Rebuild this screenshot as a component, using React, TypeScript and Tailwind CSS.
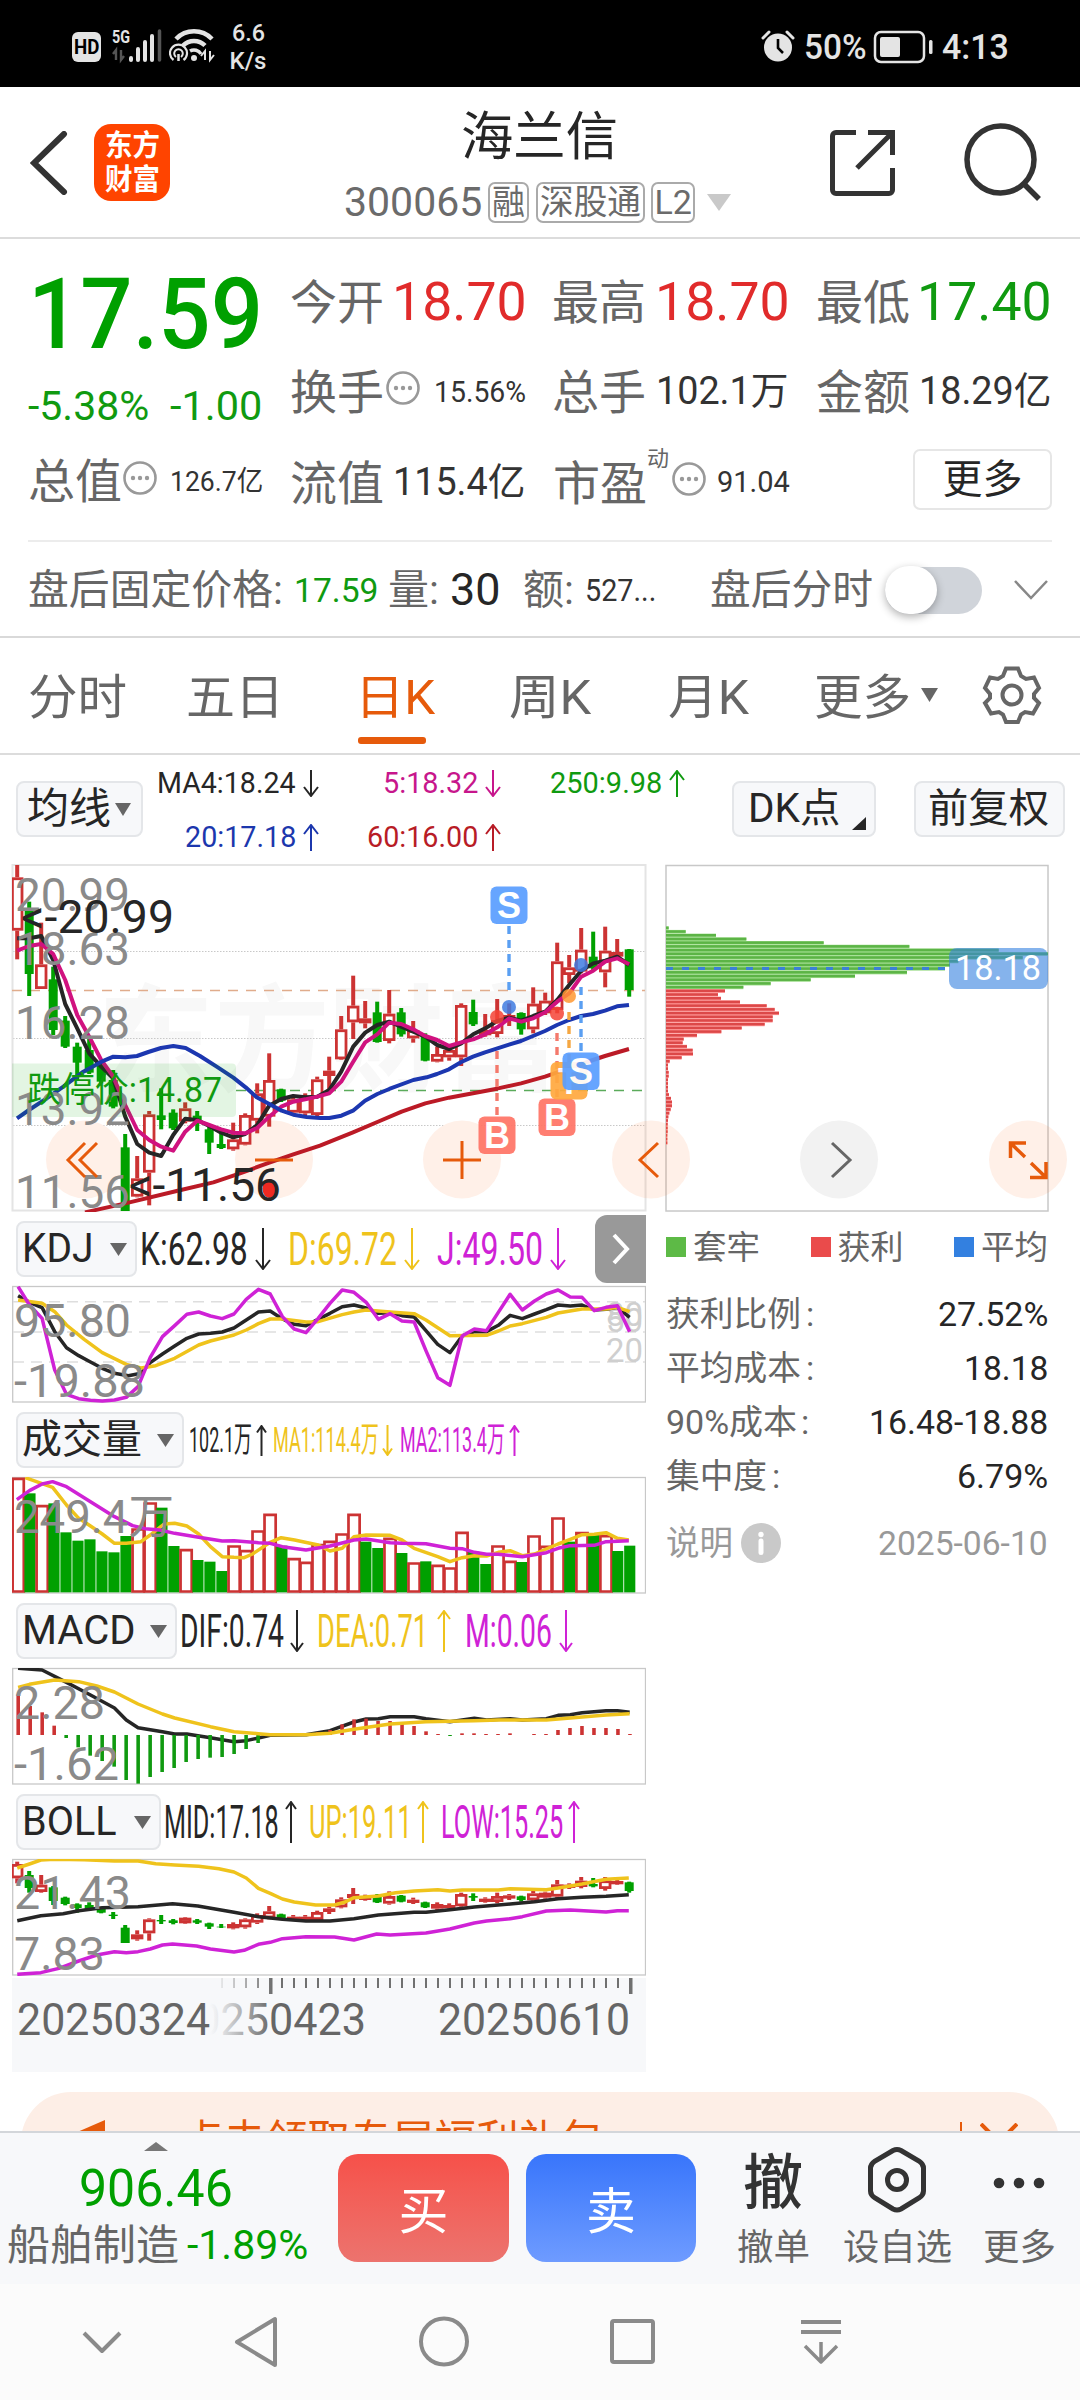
import { useLayoutEffect, useRef, useState, type ReactNode } from "react";

/* Text squeezed or stretched horizontally to a fixed width. */
function Fit({ w, className = "", children }: { w: number; className?: string; children: ReactNode }) {
  const ref = useRef<HTMLSpanElement>(null);
  const [k, setK] = useState(1);
  useLayoutEffect(() => {
    if (ref.current && ref.current.offsetWidth > 0) setK(w / ref.current.offsetWidth);
  }, [w]);
  return (
    <span className={`block shrink-0 whitespace-nowrap leading-none ${className}`} style={{ width: w }}>
      <span ref={ref} className="inline-block origin-left" style={{ transform: `scaleX(${k})` }}>
        {children}
      </span>
    </span>
  );
}

function Arrow({ up, w, h, className = "" }: { up?: boolean; w: number; h: number; className?: string }) {
  const m = w / 2;
  const d = up ? `M${m} ${h}V1M1 ${m + 2}L${m} 1L${w - 1} ${m + 2}` : `M${m} 0V${h - 1}M1 ${h - m - 2}L${m} ${h - 1}L${w - 1} ${h - m - 2}`;
  return (
    <svg width={w} height={h} viewBox={`0 0 ${w} ${h}`} className={`shrink-0 ${className}`} fill="none" stroke="currentColor" strokeWidth="2">
      <path d={d} />
    </svg>
  );
}

function Down({ w, h, className = "" }: { w: number; h: number; className?: string }) {
  return (
    <svg width={w} height={h} viewBox="0 0 10 10" preserveAspectRatio="none" className={`shrink-0 ${className}`}>
      <path d="M0 0H10L5 10Z" fill="currentColor" />
    </svg>
  );
}

function Dots({ className = "" }: { className?: string }) {
  return (
    <svg width="34" height="34" viewBox="0 0 34 34" className={`shrink-0 ${className}`}>
      <circle cx="17" cy="17" r="15.5" fill="none" stroke="#999" strokeWidth="2.600" />
      <circle cx="10" cy="17" r="2.200" fill="#999" />
      <circle cx="17" cy="17" r="2.200" fill="#999" />
      <circle cx="24" cy="17" r="2.200" fill="#999" />
    </svg>
  );
}

function StatusBar() {
  return (
    <div className="flex h-[87px] items-start bg-black text-[#e4e4e4]">
      <div className="ml-[72px] mt-[32px] flex h-[30px] w-[29px] items-center justify-center rounded-[6px] bg-[#e4e4e4]">
        <Fit w={25} className="text-[21px] font-bold text-black">HD</Fit>
      </div>
      <svg width="52" height="36" viewBox="111 28 52 36" className="ml-[10px] mt-[28px]">
        <text x="112" y="43" fontSize="19" fontWeight="700" fill="#e4e4e4" textLength="18" lengthAdjust="spacingAndGlyphs">5G</text>
        <path d="M116 60V50l-3 4M121 50v10l3-4" stroke="#555" strokeWidth="2.4" fill="none" />
        <path d="M131 60V58M138 60V49M145 60V42M152 60V36" stroke="#e4e4e4" strokeWidth="4" strokeLinecap="round" />
        <path d="M159.500 60V31" stroke="#555" strokeWidth="3.500" strokeLinecap="round" />
      </svg>
      <svg width="48" height="36" viewBox="169 28 48 36" className="ml-[6px] mt-[28px]" fill="none" stroke="#e4e4e4" strokeWidth="4.500">
        <path d="M176 39a25 25 0 0 1 36 0" />
        <path d="M183 45.500a15.500 15.500 0 0 1 22 0" />
        <path d="M190 51a8 8 0 0 1 11 3" strokeWidth="3.500" />
        <path d="M173.500 60a8.500 8.500 0 1 1 10 0" strokeWidth="2.200" />
        <path d="M176 57a4.300 4.300 0 1 1 5 0" strokeWidth="2" />
        <path d="M178.500 54V61" strokeWidth="2.500" />
        <circle cx="194" cy="58" r="3" fill="#e4e4e4" stroke="none" />
        <path d="M205 60V51l-4 5M210 51v9l4-5" strokeWidth="2" />
      </svg>
      <div className="ml-[11px] mt-[21px] flex w-[40px] flex-col items-center gap-[4px] text-[24px] font-medium">
        <Fit w={33}>6.6</Fit>
        <Fit w={37}>K/s</Fit>
      </div>
      <svg width="34" height="34" viewBox="762 29 34 34" className="ml-[493px] mt-[29px]">
        <circle cx="779" cy="47.500" r="14" fill="#e4e4e4" />
        <path d="M779 39v9l5 5" stroke="#000" strokeWidth="2.600" fill="none" />
        <path d="M764 38l6-6M794 38l-6-6" stroke="#e4e4e4" strokeWidth="3" strokeLinecap="round" />
      </svg>
      <Fit w={63} className="ml-[9px] mt-[30px] text-[35px] font-medium">50%</Fit>
      <svg width="62" height="34" viewBox="874 30 62 34" className="ml-[6px] mt-[30px]">
        <rect x="876" y="32" width="49" height="30" rx="6" fill="none" stroke="#e4e4e4" strokeWidth="2.500" />
        <rect x="881" y="37" width="20" height="20" rx="2" fill="#e4e4e4" />
        <rect x="930" y="40" width="3.500" height="14" rx="1.500" fill="#e4e4e4" />
      </svg>
      <Fit w={67} className="ml-[7px] mt-[30px] text-[35px] font-medium">4:13</Fit>
    </div>
  );
}

function Header() {
  return (
    <div className="flex h-[152px] items-start border-b-2 border-[#dcdcdc]">
      <svg width="38" height="64" viewBox="30 131 38 64" className="ml-[30px] mt-[44px]" fill="none" stroke="#333" strokeWidth="6">
        <path d="M64 134L34 163L64 192" strokeLinecap="round" />
      </svg>
      <div className="ml-[26px] mt-[37px] flex h-[77px] w-[76px] flex-col items-center justify-center gap-[5px] rounded-[17px] bg-[#ff4400] pt-[2px] text-[29px] font-bold text-white">
        <Fit w={55}>东方</Fit>
        <Fit w={55}>财富</Fit>
      </div>
      <div className="ml-[174px] flex w-[390px] flex-col">
        <Fit w={157} className="ml-[117px] mt-[25px] text-[52px] text-[#262626]">海兰信</Fit>
        <div className="mt-[17px] flex h-[42px] items-center text-[#6b6b6b]">
          <Fit w={138} className="text-[41px]">300065</Fit>
          <div className="ml-[6px] flex h-[41px] w-[41px] items-center justify-center rounded-[7px] border-2 border-[#aaa] text-[34px] leading-none"><Fit w={33}>融</Fit></div>
          <div className="ml-[7px] flex h-[41px] w-[109px] items-center justify-center rounded-[7px] border-2 border-[#aaa] text-[34px] leading-none"><Fit w={101}>深股通</Fit></div>
          <div className="ml-[6px] flex h-[41px] w-[44px] items-center justify-center rounded-[7px] border-2 border-[#aaa] text-[34px] leading-none"><Fit w={37}>L2</Fit></div>
          <Down w={24} h={17} className="ml-[12px] text-[#c9c9c9]" />
        </div>
      </div>
      <svg width="218" height="86" viewBox="824 120 218 86" className="ml-[90px] mt-[33px]" fill="none" stroke="#333" strokeWidth="5">
        <path d="M856 132.500H836a3.500 3.500 0 0 0-3.500 3.500V190a3.500 3.500 0 0 0 3.500 3.500H889a3.500 3.500 0 0 0 3.500-3.500V168" />
        <path d="M868 132.500H892.500V155M892 133L857 168" />
        <circle cx="1000.500" cy="159.500" r="33.500" strokeWidth="5.500" />
        <path d="M1023 183L1039 199" strokeWidth="5.500" />
      </svg>
    </div>
  );
}

function Quote() {
  return (
    <div className="h-[399px] border-b-2 border-[#d9d9d9] px-[28px] text-[#666]">
      <div className="flex h-[301px]">
        <div className="flex w-[265px] flex-col">
          <Fit w={235} className="mt-[27px] text-[98px] font-medium text-[#00a000]">17.59</Fit>
          <div className="mt-[22px] flex text-[41px] text-[#109a10]">
            <Fit w={121}>-5.38%</Fit>
            <Fit w={92} className="ml-[21px]">-1.00</Fit>
          </div>
          <div className="mt-[31px] flex items-center">
            <Fit w={94} className="text-[47px]">总值</Fit>
            <Dots className="ml-[1px] -mt-[8px]" />
            <Fit w={93} className="ml-[13px] text-[28px] text-[#333]">126.7亿</Fit>
          </div>
        </div>
        <div className="flex flex-1 flex-col">
          <div className="mt-[33px] flex h-[60px] items-center">
            <Fit w={94} className="text-[47px]">今开</Fit>
            <Fit w={135} className="ml-[8px] text-[54px] text-[#e12b2b]">18.70</Fit>
            <Fit w={94} className="ml-[25px] text-[47px]">最高</Fit>
            <Fit w={135} className="ml-[9px] text-[54px] text-[#e12b2b]">18.70</Fit>
            <Fit w={94} className="ml-[26px] text-[47px]">最低</Fit>
            <Fit w={135} className="ml-[7px] text-[54px] text-[#109a10]">17.40</Fit>
          </div>
          <div className="mt-[30px] flex h-[60px] items-center">
            <Fit w={94} className="text-[47px]">换手</Fit>
            <Dots className="ml-[2px] -mt-[8px]" />
            <Fit w={92} className="ml-[14px] text-[29px] text-[#333]">15.56%</Fit>
            <Fit w={94} className="ml-[26px] text-[47px]">总手</Fit>
            <Fit w={132} className="ml-[10px] -mt-[2px] text-[38px] text-[#333]">102.1万</Fit>
            <Fit w={94} className="ml-[28px] text-[47px]">金额</Fit>
            <Fit w={132} className="ml-[9px] -mt-[2px] text-[38px] text-[#333]">18.29亿</Fit>
          </div>
          <div className="mt-[31px] flex h-[60px] items-center">
            <Fit w={94} className="text-[47px]">流值</Fit>
            <Fit w={132} className="ml-[9px] -mt-[2px] text-[38px] text-[#333]">115.4亿</Fit>
            <Fit w={94} className="ml-[28px] text-[47px]">市盈</Fit>
            <Fit w={22} className="-mt-[48px] text-[22px]">动</Fit>
            <Dots className="ml-[3px] -mt-[9px]" />
            <Fit w={73} className="-mt-[2px] ml-[11px] text-[29px] text-[#333]">91.04</Fit>
            <div className="-mt-[7px] ml-[123px] flex h-[61px] w-[139px] shrink-0 items-center justify-center rounded-[7px] border-2 border-[#e6e6e6]">
              <Fit w={80} className="text-[40px] text-[#262626]">更多</Fit>
            </div>
          </div>
        </div>
      </div>
      <div className="flex h-[96px] items-center border-t-2 border-[#ececec] pt-[2px]">
        <Fit w={255} className="text-[41px]">盘后固定价格:</Fit>
        <Fit w={84} className="ml-[11px] text-[34px] text-[#109a10]">17.59</Fit>
        <Fit w={51} className="ml-[10px] text-[41px]">量:</Fit>
        <Fit w={50} className="ml-[11px] text-[44px] text-[#262626]">30</Fit>
        <Fit w={51} className="ml-[23px] text-[41px]">额:</Fit>
        <Fit w={71} className="ml-[11px] text-[32px] text-[#333]">527...</Fit>
        <Fit w={163} className="ml-[54px] text-[41px]">盘后分时</Fit>
        <div className="ml-[12px] flex h-[47px] w-[97px] items-center rounded-full bg-[#d0d4da]">
          <div className="h-[48px] w-[52px] rounded-full bg-white shadow-[0_3px_8px_rgba(0,0,0,0.3)]" />
        </div>
        <svg width="34" height="22" viewBox="0 0 34 22" className="ml-[32px]" fill="none" stroke="#888" strokeWidth="2.5">
          <path d="M1 2L17 19L33 2" />
        </svg>
      </div>
    </div>
  );
}

function Tabs() {
  return (
    <div className="flex h-[117px] items-start border-b-2 border-[#dcdcdc] pt-[36px] text-[48px] text-[#666]">
      <Fit w={99} className="ml-[28px]">分时</Fit>
      <Fit w={98} className="ml-[59px]">五日</Fit>
      <div className="ml-[74px] flex w-[76px] flex-col text-[#e65a0b]">
        <Fit w={80} className="-ml-[3px]">日K</Fit>
        <div className="mt-[15px] h-[7px] w-[68px] rounded-[3px] bg-[#e65a0b]" />
      </div>
      <Fit w={82} className="ml-[75px]">周K</Fit>
      <Fit w={81} className="ml-[77px]">月K</Fit>
      <Fit w={97} className="ml-[65px]">更多</Fit>
      <Down w={17} h={14} className="ml-[10px] mt-[14px] text-[#666]" />
      <svg width="60" height="62" viewBox="-30 -31 60 62" className="ml-[44px] -mt-[10px]" fill="none" stroke="#666" strokeWidth="4">
        <path d="M-6 -26.500H6L9 -19L14 -16L22 -17.500L27 -7L22 -1V3L27 8L21 18.500L13 17L9 19.500L6 27H-6L-9 19.500L-13 17L-21 18.500L-27 8L-22 3V-1L-27 -7L-22 -17.500L-14 -16L-9 -19Z" />
        <circle r="9.500" />
      </svg>
    </div>
  );
}

function MaItem({ w, up, cell, className, children }: { w: number; up?: boolean; cell: string; className: string; children: ReactNode }) {
  return (
    <div className={`flex items-center justify-end ${cell} ${className}`}>
      <Fit w={w} className="text-[30px]">{children}</Fit>
      <Arrow up={up} w={16} h={27} className="ml-[7px]" />
    </div>
  );
}

function Toolbar() {
  return (
    <div className="flex h-[107px] items-start text-[#262626]">
      <div className="ml-[16px] mt-[26px] flex h-[56px] w-[127px] items-center rounded-[8px] border-2 border-[#e4e6e9] bg-[#f7f8fa] pl-[9px]">
        <Fit w={84} className="text-[42px]">均线</Fit>
        <Down w={16} h={13} className="ml-[4px] text-[#666]" />
      </div>
      <div className="mt-[14px] flex w-[543px] flex-col gap-[26px]">
        <div className="flex h-[28px]">
          <MaItem w={139} cell="w-[176px]" className="text-[#262626]">MA4:18.24</MaItem>
          <MaItem w={95} cell="w-[182px]" className="text-[#c7168c]">5:18.32</MaItem>
          <MaItem w={112} up cell="w-[184px]" className="text-[#109a10]">250:9.98</MaItem>
        </div>
        <div className="flex h-[28px]">
          <MaItem w={111} up cell="w-[176px]" className="text-[#1c37ad]">20:17.18</MaItem>
          <MaItem w={111} up cell="w-[182px]" className="text-[#b81c26]">60:16.00</MaItem>
        </div>
      </div>
      <div className="ml-[46px] mt-[26px] flex h-[56px] w-[144px] items-center rounded-[8px] border-2 border-[#e4e6e9] bg-[#f7f8fa] pl-[14px]">
        <Fit w={92} className="text-[40px]">DK点</Fit>
        <svg width="14" height="13" viewBox="0 0 14 13" className="ml-[12px] mt-[29px]"><path d="M14 0V13H0Z" fill="#262626" /></svg>
      </div>
      <div className="ml-[38px] mt-[26px] flex h-[56px] w-[151px] items-center justify-center rounded-[8px] border-2 border-[#e4e6e9] bg-[#f7f8fa] pr-[2px]">
        <Fit w={121} className="text-[40px]">前复权</Fit>
      </div>
    </div>
  );
}

type Candle = [string, number, number, number, number];

const DAILY: Candle[] = [
  ["r", 45, 82, 242, 328], ["g", 155, 180, 372, 438], ["r", 218, 343, 417, 417], ["g", 350, 388, 540, 555],
  ["g", 498, 512, 590, 594], ["g", 578, 590, 638, 690], ["g", 560, 600, 668, 672], ["g", 640, 645, 695, 700],
  ["g", 660, 690, 770, 775], ["g", 852, 892, 1083, 1083], ["r", 918, 985, 1040, 1042], ["r", 783, 793, 968, 1066],
  ["g", 715, 796, 810, 838], ["g", 778, 788, 835, 840], ["r", 757, 775, 815, 820], ["g", 783, 797, 812, 843],
  ["g", 830, 838, 878, 912], ["g", 848, 882, 894, 897], ["r", 818, 868, 898, 902], ["r", 790, 795, 884, 886],
  ["r", 700, 730, 812, 850], ["r", 610, 690, 800, 830], ["g", 716, 718, 752, 756], ["r", 735, 748, 788, 795],
  ["r", 730, 740, 790, 795], ["r", 680, 688, 795, 798], ["r", 620, 662, 678, 720], ["r", 498, 538, 628, 630],
  ["r", 377, 467, 517, 567], ["r", 453, 505, 520, 535], ["g", 455, 487, 576, 578], ["r", 420, 491, 573, 580],
  ["g", 474, 487, 553, 560], ["r", 513, 540, 565, 578], ["g", 550, 558, 632, 634], ["r", 590, 612, 635, 637],
  ["r", 590, 600, 622, 632], ["r", 460, 465, 622, 648], ["g", 449, 486, 523, 528], ["r", 492, 540, 556, 560],
  ["r", 447, 510, 552, 562], ["r", 460, 495, 510, 528], ["g", 487, 489, 538, 554], ["r", 412, 461, 538, 550],
  ["r", 428, 452, 490, 495], ["r", 278, 334, 480, 490], ["r", 315, 352, 375, 400], ["r", 234, 299, 365, 370],
  ["g", 245, 320, 355, 360], ["r", 230, 302, 367, 412], ["r", 267, 306, 320, 325], ["g", 297, 298, 420, 440],
];

const BOLL: Candle[] = [
  ["r", 215, 222, 265, 280], ["g", 243, 255, 294, 308], ["r", 255, 284, 306, 308], ["g", 288, 292, 333, 345],
  ["g", 320, 323, 342, 346], ["g", 340, 343, 354, 368], ["g", 337, 345, 358, 362], ["g", 352, 356, 368, 370],
  ["g", 366, 374, 378, 387], ["g", 405, 413, 459, 459], ["r", 421, 433, 448, 452], ["r", 385, 388, 430, 452],
  ["g", 375, 390, 394, 402], ["g", 387, 391, 399, 403], ["r", 381, 383, 400, 402], ["g", 387, 391, 398, 402],
  ["g", 398, 400, 410, 417], ["g", 402, 410, 412, 414], ["r", 397, 402, 415, 418], ["r", 385, 388, 412, 416],
  ["r", 370, 375, 398, 402], ["r", 348, 364, 385, 388], ["g", 371, 373, 384, 386], ["r", 375, 380, 387, 393],
  ["r", 375, 380, 388, 393], ["r", 362, 366, 390, 392], ["r", 350, 355, 366, 372], ["r", 322, 328, 352, 355],
  ["r", 294, 312, 324, 342], ["r", 314, 320, 328, 332], ["g", 312, 318, 337, 339], ["r", 304, 318, 341, 344],
  ["g", 315, 317, 335, 337], ["r", 323, 329, 338, 342], ["g", 335, 337, 352, 354], ["r", 337, 342, 356, 360],
  ["r", 340, 345, 352, 356], ["r", 308, 312, 349, 352], ["g", 310, 318, 323, 333], ["r", 322, 326, 335, 338],
  ["r", 308, 318, 336, 340], ["r", 312, 316, 320, 330], ["g", 317, 319, 330, 335], ["r", 303, 310, 331, 334],
  ["r", 305, 308, 323, 326], ["r", 270, 283, 320, 325], ["r", 280, 284, 292, 297], ["r", 261, 272, 291, 295],
  ["g", 264, 282, 289, 292], ["r", 261, 271, 297, 302], ["r", 266, 273, 279, 284], ["g", 275, 277, 303, 308],
];

const RED = "#cc3333";
const GREEN = "#00a000";

/* Candles spaced 12px apart; y values are in thirds of a pixel below oy. */
function Candles({ data, oy, hollow = 0 }: { data: Candle[]; oy: number; hollow?: number }) {
  return (
    <g>
      {data.map(([t, hi, top, bot, lo], i) => {
        const x = 17.2 + 12 * i;
        const y = (v: number) => oy + v / 3;
        if (t === "g")
          return (
            <g key={i} fill={GREEN}>
              <rect x={x - 2} y={y(hi)} width={4} height={(lo - hi) / 3} />
              <rect x={x - 4.5} y={y(top)} width={9} height={(bot - top) / 3} />
            </g>
          );
        const solid = bot - top < hollow;
        return (
          <g key={i} fill={RED}>
            <rect x={x - 2} y={y(hi)} width={4} height={(top - hi) / 3} />
            <rect x={x - 2} y={y(bot)} width={4} height={(lo - bot) / 3} />
            <rect x={x - 4.8} y={y(top) + 1.4} width={9.6} height={Math.max((bot - top) / 3 - 2.8, 0.5)} fill={solid ? RED : "#fff"} stroke={RED} strokeWidth={2.8} />
          </g>
        );
      })}
    </g>
  );
}

const MA4 = [265, 265, 258, 330, 462, 535, 610, 650, 685, 800, 882, 908, 918, 855, 806, 810, 828, 848, 862, 852, 825, 767, 747, 738, 742, 740, 720, 665, 590, 548, 525, 515, 530, 545, 560, 585, 597, 580, 553, 535, 513, 503, 512, 498, 485, 450, 405, 362, 340, 332, 320, 345];
const MA5 = [302, 288, 282, 312, 390, 495, 560, 630, 680, 765, 840, 870, 890, 902, 845, 812, 825, 838, 848, 850, 834, 800, 770, 755, 748, 740, 730, 695, 635, 577, 553, 518, 522, 538, 558, 570, 588, 577, 568, 553, 532, 505, 515, 505, 487, 455, 430, 380, 362, 335, 325, 343];
const line = (a: number[]) => a.map((v, i) => `${17.2 + 12 * i},${850 + v / 3}`).join(" ");

/* Right ends of the price distribution bars, one per price level from the top. */
const COST = [
  86, 137, 228, 319, 551, 808, 1076, 1224, 1148, 955, 930, 915, 801, 645, 512, 392, 310,
  255, 234, 243, 300, 380, 404, 417, 398, 398, 374, 305, 244, 171, 131, 128, 141, 158, 159, 125, 89, 84, 84, 86, 86, 84, 84, 84, 84,
  87, 93, 96, 96, 92, 88, 85, 84, 83, 83, 83, 82, 82, 82,
];

function Tag({ x, y, c, ch }: { x: number; y: number; c: string; ch: string }) {
  return (
    <g opacity="0.92">
      <rect x={x} y={y} width="37" height="37.500" rx="6" fill={c} />
      <text x={x + 18.500} y={y + 31.500} fontSize="36" fontWeight="700" fill="#fff" textAnchor="middle" fontFamily="Liberation Sans">{ch}</text>
    </g>
  );
}

function Label({ x, y, w, s = 47, c = "#8a8a8a", children }: { x: number; y: number; w: number; s?: number; c?: string; children: string }) {
  return <text x={x} y={y} fontSize={s} fill={c} textLength={w} lengthAdjust="spacingAndGlyphs">{children}</text>;
}

function MainChart() {
  return (
    <svg width="1080" height="350" viewBox="0 862 1080 350" className="block">
      <defs><clipPath id="main"><rect x="12" y="864" width="634" height="348" /></clipPath></defs>
      <g fontSize="116" fontWeight="700" fill="#f8f8f8">
        <text y="1082" x="98">东方</text>
        <text y="1082" x="328">财富</text>
      </g>
      <g stroke="#c8c8c8" strokeDasharray="1.500 1.500" strokeWidth="1">
        <path d="M13 951.500H645M13 1038.500H645M13 1125.500H645" />
      </g>
      <rect x="12.500" y="865" width="633" height="345.500" fill="none" stroke="#e4e4e4" strokeWidth="2" />
      <path d="M12 990.500H645" stroke="#e0ac8c" strokeWidth="1.500" strokeDasharray="10 8" />
      <path d="M236 1090.500H645" stroke="#5bab5b" strokeWidth="1.500" strokeDasharray="10 8" />
      <g fill="#fff0e8">
        <circle cx="85" cy="1159.500" r="39" /><circle cx="274" cy="1159.500" r="39" /><circle cx="462" cy="1159.500" r="39" />
      </g>
      <g clipPath="url(#main)">
        <Candles data={DAILY} oy={850} />
        <g fill="none" strokeWidth="4" strokeLinejoin="round">
          <polyline points={line(MA4)} stroke="#262626" />
          <polyline points={line(MA5)} stroke="#d0127f" />
          <polyline transform="translate(0,850) scale(0.33333)" vectorEffect="non-scaling-stroke" stroke="#1c37b0" points="51,805 87,780 140,745 190,710 250,665 305,635 340,620 376,622 411,618 445,606 483,594 520,588 557,594 600,618 650,650 700,683 737,712 770,742 808,762 845,782 880,794 920,801 960,804 988,804 1024,797 1059,782 1095,752 1132,732 1168,717 1240,690 1280,682 1311,672 1347,658 1384,636 1419,620 1455,607 1527,584 1563,573 1599,558 1635,543 1671,525 1707,510 1743,498 1779,492 1815,482 1851,469 1887,465" />
          <polyline transform="translate(0,850) scale(0.33333)" vectorEffect="non-scaling-stroke" stroke="#bb1a26" points="255,1087 376,1060 530,1023 640,997 720,970 808,938 880,913 960,887 1059,847 1132,816 1205,785 1276,760 1347,743 1419,730 1491,716 1563,700 1635,680 1707,655 1779,630 1815,618 1887,597" />
        </g>
      </g>
      <path d="M12 1063.500H232a4 4 0 0 1 4 4V1113a4 4 0 0 1-4 4H12Z" fill="#00a000" fillOpacity="0.11" />
      <Label x={15} y={911} w={115}>20.99</Label>
      <Label x={15} y={965} w={115}>18.63</Label>
      <Label x={15} y={1039} w={115}>16.28</Label>
      <Label x={15} y={1125} w={115}>13.92</Label>
      <Label x={15} y={1208} w={115}>11.56</Label>
      <Label x={27} y={1102} w={195} s={35} c="#109a10">跌停价:14.87</Label>
      <Label x={21} y={933} w={153} c="#262626">{"<-20.99"}</Label>
      <ellipse cx="269.500" cy="1188.500" rx="7" ry="9.500" fill="#ef2a22" />
      <Label x={129} y={1201} w={152} c="#262626">{"<-11.56"}</Label>

      <g fill="none" strokeWidth="3.400" strokeDasharray="8 6">
        <path d="M509 926V990" stroke="#5a9ff2" />
        <path d="M581 987V1052" stroke="#5a9ff2" />
        <path d="M497 1051V1116M557 1033V1098" stroke="#f4796c" />
        <path d="M569 1012V1062" stroke="#f5a742" />
      </g>
      <g fillOpacity="0.85">
        <circle cx="509" cy="1007" r="7" fill="#3f7be0" /><circle cx="581" cy="965" r="7" fill="#3f7be0" />
        <circle cx="497" cy="1017" r="7" fill="#f44336" /><circle cx="557" cy="1013.500" r="7" fill="#f44336" />
        <circle cx="569" cy="996" r="7" fill="#ff9830" />
      </g>
      <Tag x={490.5} y={886.5} c="#5a9eff" ch="S" />
      <Tag x={478.5} y={1116.500} c="#ff7466" ch="B" />
      <Tag x={538.500} y={1098.500} c="#ff7466" ch="B" />
      <Tag x={550.500} y={1062} c="#ffa93e" ch="T" />
      <Tag x={562.500} y={1052.500} c="#5a9eff" ch="S" />

      <rect x="666" y="865.500" width="382" height="345.500" fill="none" stroke="#c8c8c8" strokeWidth="1.500" />
      {COST.map((r, i) => {
        const w = (r - 78) / 3;
        const y = 926.2 + i * 3.705;
        const green = i < 17;
        return (
          <g key={i}>
            <rect x="666" y={y} width={w} height="3.700" fill={green ? "#9fdd8c" : "#ff9494"} />
            <rect x="666" y={y + 0.4} width={w} height="2.500" fill={green ? "#5cb446" : "#dc4848"} />
          </g>
        );
      })}
      <path d="M666 968.500H945" stroke="#3b80d8" strokeWidth="3" strokeDasharray="7 9" />
      <rect x="949" y="948" width="99" height="41" rx="8" fill="#3380e0" fillOpacity="0.6" />
      <Label x={955} y={979.500} w={86} s={35} c="#fff">18.18</Label>

      <circle cx="651" cy="1159.500" r="39" fill="#ff7a30" fillOpacity="0.11" />
      <circle cx="839" cy="1159.500" r="39" fill="#f2f2f2" />
      <circle cx="1028" cy="1159.500" r="39" fill="#ff7a30" fillOpacity="0.11" />
      <g fill="none" stroke="#e65a0b" strokeWidth="3">
        <path d="M85 1143L68 1160L85 1177M97 1143L80 1160L97 1177" />
        <path d="M255 1160H293M443 1160H481M462 1141V1179" />
        <path d="M658 1143L640 1160L658 1177" />
        <path d="M1026 1143H1010.500V1158M1011 1143.500L1025 1157M1030 1177.500H1046V1162M1045.500 1177L1031 1163" strokeWidth="3.500" />
      </g>
      <path d="M832 1143L850 1160L832 1177" fill="none" stroke="#666" strokeWidth="3" />
    </svg>
  );
}

function Line({ c, p }: { c: string; p: string }) {
  return <polyline points={p} fill="none" stroke={c} strokeWidth="3.500" strokeLinejoin="round" vectorEffect="non-scaling-stroke" />;
}

type Item = { t: string; w: number; aw: number; up?: boolean; ml: string; gap: string; c: string };

function PanelHead({ name, nw, box, small, items, children }: { name: string; nw: number; box: string; small?: boolean; items: Item[]; children?: ReactNode }) {
  return (
    <div className="flex h-[72px] items-center pt-[2px]">
      <div className={`ml-[16px] flex h-[56px] shrink-0 items-center justify-between rounded-[8px] border-2 border-[#e4e6e9] bg-[#f7f8fa] pl-[4px] pr-[8px] text-[#262626] ${box}`}>
        <Fit w={nw} className="text-[40px]">{name}</Fit>
        <Down w={17} h={13} className="text-[#666]" />
      </div>
      {items.map((it) => (
        <div key={it.t} className={`flex items-center ${it.ml} ${it.c}`}>
          <Fit w={it.w} className={small ? "text-[35px]" : "text-[46px]"}>{it.t}</Fit>
          <Arrow up={it.up} w={it.aw} h={small ? 31 : 42} className={it.gap} />
        </div>
      ))}
      {children}
    </div>
  );
}

function PanelChart({ top, origin, id, labels, under, children }: { top: number; origin: number; id: string; labels: ReactNode; under?: ReactNode; children: ReactNode }) {
  return (
    <svg width="646" height="119" viewBox={`0 ${top} 646 119`} className="block">
      <defs><clipPath id={id}><rect x="12" y={top + 2} width="634" height="117" /></clipPath></defs>
      <rect x="12.700" y={top + 2.5} width="632.800" height="115.500" fill="none" stroke="#c8c8c8" strokeWidth="1.300" />
      <g clipPath={`url(#${id})`}>
        {under}
        <g transform={`translate(0,${origin}) scale(0.42088,0.33333)`}>{children}</g>
      </g>
      {labels}
    </svg>
  );
}

const VOL = "r233 g280 r315 g310 g397 g422 g418 g454 g457 g408 r385 r307 g323 g438 r447 g480 g485 g513 r436 r450 r391 r341 g437 r474 r485 r432 r422 r400 r341 g425 g444 r413 g459 r487 g484 r494 r502 r395 g455 g492 r436 r482 g486 r406 r437 r352 g425 r396 g405 r405 g453 g437".split(" ");
const HIST = [313, 348, 367, 407, 444, 472, 497, 513, 530, 570, 581, 561, 546, 534, 516, 507, 503, 501, 492, 477, 459, 438, 436, 436, 435, 426, 420, 403, 388, 386, 393, 393, 399, 408, 424, 432, 438, 430, 430, 432, 432, 430, 435, 432, 432, 420, 414, 408, 414, 414, 417, 432];

const Y = "#efc31c";
const P = "#cf22d6";
const K = "#262626";

function KdjPanel() {
  return (
    <div>
      <PanelHead name="KDJ" nw={71} box="w-[121px]" items={[
        { t: "K:62.98", w: 108, aw: 16, ml: "ml-[3px]", gap: "ml-[7px]", c: "text-[#262626]" },
        { t: "D:69.72", w: 109, aw: 16, ml: "ml-[17px]", gap: "ml-[7px]", c: "text-[#efc31c]" },
        { t: "J:49.50", w: 106, aw: 16, ml: "ml-[17px]", gap: "ml-[7px]", c: "text-[#cf22d6]" },
      ]}>
        <div className="ml-auto flex h-[68px] w-[51px] items-center justify-center rounded-l-[12px] bg-[#999]">
          <svg width="18" height="32" viewBox="0 0 18 32" fill="none" stroke="#fff" strokeWidth="4"><path d="M2 2L15 16L2 30" /></svg>
        </div>
      </PanelHead>
      <PanelChart top={1284} origin={1210} id="kdj"
        under={<>
          <path d="M13 1301.700H645M13 1332H645M13 1362H645" stroke="#dedede" strokeWidth="1.600" strokeDasharray="11 7" />
          <Label x={606} y={1326} w={37} s={33} c="#cfcfcf">80</Label>
          <Label x={606} y={1332} w={37} s={33} c="#cfcfcf">50</Label>
          <Label x={606} y={1362} w={37} s={33} c="#cfcfcf">20</Label>
        </>}
        labels={<><Label x={14} y={1336.5} w={117}>95.80</Label><Label x={14} y={1397} w={131}>-19.88</Label></>}>
        <Line c={K} p="43,257 70,277 100,293 130,365 158,413 187,437 215,456 243,475 272,490 305,497 335,490 357,458 386,432 415,408 444,385 472,372 500,370 528,366 556,354 585,330 614,306 642,303 671,327 699,343 727,347 756,328 784,310 813,290 841,285 870,294 899,310 927,308 955,317 984,321 1012,362 1040,403 1069,428 1098,378 1127,365 1156,365 1184,346 1212,316 1241,326 1270,312 1298,299 1326,285 1355,288 1383,285 1412,300 1440,298 1467,292 1496,322" />
        <Line c={Y} p="43,270 100,280 130,305 158,345 200,388 243,428 300,463 335,474 370,467 415,445 472,405 500,393 556,375 585,360 614,341 642,327 671,327 727,336 756,335 813,314 841,306 870,300 927,306 984,311 1012,330 1069,377 1156,376 1184,363 1212,348 1241,341 1298,322 1326,309 1383,297 1440,297 1467,292 1496,305" />
        <Line c={P} p="43,230 70,285 100,325 130,480 158,553 187,566 215,571 243,573 272,570 300,562 328,530 357,442 386,380 415,347 444,313 472,306 500,318 528,326 556,312 585,268 614,238 642,252 671,320 699,357 727,368 756,325 784,280 813,240 841,247 870,277 899,328 927,311 955,333 984,336 1012,422 1040,503 1069,526 1098,378 1127,357 1156,362 1184,307 1212,253 1241,300 1270,273 1298,252 1326,240 1355,261 1383,262 1412,302 1440,292 1467,287 1496,365" />
      </PanelChart>
    </div>
  );
}

function VolumePanel() {
  return (
    <div>
      <PanelHead name="成交量" nw={120} box="w-[168px]" small items={[
        { t: "102.1万", w: 63, aw: 11, up: true, ml: "ml-[5px]", gap: "ml-[4px]", c: "text-[#262626]" },
        { t: "MA1:114.4万", w: 106, aw: 11, ml: "ml-[6px]", gap: "ml-[3px]", c: "text-[#efc31c]" },
        { t: "MA2:113.4万", w: 105, aw: 11, up: true, ml: "ml-[7px]", gap: "ml-[4px]", c: "text-[#cf22d6]" },
      ]} />
      <PanelChart top={1475} origin={1400} id="vol" labels={<Label x={14} y={1532.5} w={160}>249.4万</Label>}>
        {VOL.map((v, i) => {
          const y = Number(v.slice(1));
          const x = 43 + 28.5 * i;
          return v[0] === "g" ? (
            <rect key={i} x={x - 13.5} y={y} width="26.500" height={577 - y} fill={GREEN} />
          ) : (
            <rect key={i} x={x - 13} y={y + 3.5} width="26.500" height={571 - y} fill="#fff" stroke={RED} strokeWidth="2.700" vectorEffect="non-scaling-stroke" />
          );
        })}
        <Line c={Y} p="60,233 125,262 158,315 187,355 215,378 243,402 272,430 300,430 335,425 357,405 390,372 415,370 444,378 472,402 500,440 528,470 556,472 580,473 600,462 642,427 668,413 700,420 756,435 784,453 813,445 841,410 870,405 927,406 955,420 984,445 1040,470 1069,485 1098,473 1127,467 1156,468 1184,457 1212,452 1241,467 1270,462 1298,447 1326,432 1355,418 1383,404 1412,403 1440,398 1467,415 1494,420" />
        <Line c={P} p="40,299 70,272 100,252 125,245 158,260 215,305 272,350 315,377 345,386 380,390 415,400 472,412 528,423 556,422 614,428 642,430 671,440 727,450 784,438 841,420 870,417 927,428 955,430 1012,431 1069,445 1098,446 1127,457 1156,463 1184,463 1241,470 1298,458 1326,445 1355,437 1412,436 1440,425 1494,422" />
      </PanelChart>
    </div>
  );
}

function MacdPanel() {
  return (
    <div>
      <PanelHead name="MACD" nw={113} box="w-[161px]" items={[
        { t: "DIF:0.74", w: 104, aw: 14, ml: "ml-[3px]", gap: "ml-[6px]", c: "text-[#262626]" },
        { t: "DEA:0.71", w: 111, aw: 14, up: true, ml: "ml-[13px]", gap: "ml-[9px]", c: "text-[#efc31c]" },
        { t: "M:0.06", w: 87, aw: 14, ml: "ml-[14px]", gap: "ml-[7px]", c: "text-[#cf22d6]" },
      ]} />
      <PanelChart top={1666} origin={1590} id="macd"
        labels={<><Label x={14} y={1719} w={91}>2.28</Label><Label x={14} y={1780} w={105}>-1.62</Label></>}>
        <Line c={K} p="43,235 100,240 158,277 215,315 272,354 300,390 328,413 386,425 415,432 444,432 500,443 556,455 585,452 614,444 642,436 727,434 784,422 841,396 870,387 899,386 927,380 984,380 1012,386 1069,395 1127,385 1156,390 1212,386 1241,390 1298,386 1326,376 1355,374 1383,368 1440,362 1467,362 1496,367" />
        {HIST.map((v, i) => (
          <rect key={i} x={39 + 28.5 * i} y={Math.min(v, 435)} width="8.500" height={Math.abs(435 - v)} fill={v < 435 ? RED : "#109a10"} />
        ))}
        <Line c={Y} p="43,292 70,283 130,270 187,275 230,288 272,306 328,342 386,372 415,384 500,410 556,425 614,431 642,434 727,434 784,430 841,418 927,402 1012,395 1069,394 1127,392 1184,390 1212,390 1298,390 1355,384 1440,375 1496,371" />
      </PanelChart>
    </div>
  );
}

function BollPanel() {
  return (
    <div>
      <PanelHead name="BOLL" nw={95} box="w-[145px]" items={[
        { t: "MID:17.18", w: 115, aw: 12, up: true, ml: "ml-[3px]", gap: "ml-[6px]", c: "text-[#262626]" },
        { t: "UP:19.11", w: 103, aw: 12, up: true, ml: "ml-[12px]", gap: "ml-[5px]", c: "text-[#efc31c]" },
        { t: "LOW:15.25", w: 122, aw: 12, up: true, ml: "ml-[12px]", gap: "ml-[5px]", c: "text-[#cf22d6]" },
      ]} />
      <PanelChart top={1857} origin={1790} id="boll" under={<Candles data={BOLL} oy={1790} hollow={15} />}
        labels={<><Label x={14} y={1909} w={117}>21.43</Label><Label x={14} y={1970} w={91}>7.83</Label></>}>
        <Line c={Y} p="41,234 70,222 97,210 130,208 200,209 272,213 328,213 370,221 415,225 472,229 520,236 556,246 585,264 614,295 642,310 671,327 699,336 750,345 795,345 820,336 841,323 899,318 940,308 984,303 1040,299 1069,303 1098,300 1184,300 1212,296 1298,299 1326,294 1383,282 1440,268 1494,264" />
        <Line c={K} p="41,392 97,377 150,371 187,362 243,353 328,350 410,341 470,348 556,367 614,380 671,388 727,393 784,393 841,386 899,375 984,367 1012,367 1069,359 1127,351 1212,342 1270,335 1326,326 1383,322 1440,319 1494,314" />
        <Line c={P} p="41,553 97,548 140,535 187,513 230,495 272,485 300,488 328,485 357,477 386,465 410,462 467,468 500,477 556,486 580,481 614,463 642,457 671,446 727,440 795,441 841,450 895,432 927,435 1012,429 1069,417 1127,399 1156,393 1212,386 1241,380 1298,363 1355,360 1440,366 1467,362 1494,362" />
      </PanelChart>
    </div>
  );
}

function TimeAxis() {
  return (
    <svg width="646" height="96" viewBox="0 1976 646 96" className="block">
      <defs>
        <linearGradient id="fade" x1="0" x2="1" y1="0" y2="0">
          <stop offset="0" stopColor="#f7f8fa" /><stop offset="0.15" stopColor="#f7f8fa" stopOpacity="0.9" /><stop offset="1" stopColor="#f7f8fa" stopOpacity="0" />
        </linearGradient>
      </defs>
      <rect x="12" y="1978" width="634" height="94" fill="#f7f8fa" />
      {Array.from({ length: 35 }, (_, i) => (
        <rect key={i} x={221 + i * 12} y="1978" width={i === 4 || i === 34 ? 3.5 : 2} height={i === 4 || i === 34 ? 16 : 10} fill="#707070" />
      ))}
      <Label x={172} y={2035} w={194} s={44} c="#666">20250423</Label>
      <rect x="12" y="1978" width="198" height="94" fill="#f7f8fa" />
      <rect x="210" y="1978" width="62" height="94" fill="url(#fade)" />
      <Label x={17} y={2035} w={193} s={44} c="#666">20250324</Label>
      <Label x={438} y={2035} w={192} s={44} c="#666">20250610</Label>
    </svg>
  );
}

function CostRow({ k, kw, colon, v, vw }: { k: string; kw: number; colon: string; v: string; vw: number }) {
  return (
    <div className="flex h-[54px] items-center justify-between text-[34px]">
      <div className="flex text-[#666]">
        <Fit w={kw}>{k}</Fit>
        <span className={`leading-none ${colon}`}>:</span>
      </div>
      <Fit w={vw} className="text-[#262626]">{v}</Fit>
    </div>
  );
}

function CostInfo() {
  return (
    <div className="ml-[20px] w-[382px]">
      <div className="mt-[19px] flex h-[32px] items-center justify-between text-[33px] text-[#666]">
        <div className="flex items-center gap-[7px]"><div className="h-[20px] w-[20px] bg-[#5dba46]" /><Fit w={67}>套牢</Fit></div>
        <div className="flex items-center gap-[7px]"><div className="h-[20px] w-[20px] bg-[#ea4b4b]" /><Fit w={66}>获利</Fit></div>
        <div className="flex items-center gap-[7px]"><div className="h-[20px] w-[20px] bg-[#3380e0]" /><Fit w={67}>平均</Fit></div>
      </div>
      <div className="mt-[24px]">
        <CostRow k="获利比例" kw={135} colon="ml-[5px]" v="27.52%" vw={110} />
        <CostRow k="平均成本" kw={135} colon="ml-[5px]" v="18.18" vw={84} />
        <CostRow k="90%成本" kw={131} colon="ml-[4px]" v="16.48-18.88" vw={179} />
        <CostRow k="集中度" kw={101} colon="ml-[5px]" v="6.79%" vw={91} />
      </div>
      <div className="mt-[20px] flex h-[40px] items-center text-[34px] text-[#999]">
        <Fit w={67}>说明</Fit>
        <svg width="40" height="40" viewBox="0 0 40 40" className="ml-[8px]">
          <circle cx="20" cy="20" r="20" fill="#c9c9c9" />
          <circle cx="20" cy="11.500" r="2.700" fill="#fff" />
          <path d="M20 18V29.500" stroke="#fff" strokeWidth="5" strokeLinecap="round" />
        </svg>
        <Fit w={170} className="ml-auto">2025-06-10</Fit>
      </div>
    </div>
  );
}

function Banner() {
  return (
    <div className="mt-[20px] h-[39px] overflow-hidden px-[21px]">
      <div className="flex h-[100px] items-start rounded-[50px] bg-[#fdeee6] text-[#e65a0b]">
        <svg width="30" height="30" viewBox="0 0 30 30" className="ml-[54px] mt-[28px]"><path d="M30 0V30L0 22V13Z" fill="currentColor" /></svg>
        <Fit w={422} className="ml-[76px] mt-[28px] text-[43px]">点击领取专属福利礼包</Fit>
        <div className="ml-[357px] mt-[30px] h-[40px] w-[1.500px] bg-[#e65a0b]" />
        <svg width="38" height="38" viewBox="0 0 38 38" className="ml-[18px] mt-[31px]" stroke="currentColor" strokeWidth="4"><path d="M1 1L37 37M37 1L1 37" /></svg>
      </div>
    </div>
  );
}

function TradeBar() {
  return (
    <div className="flex h-[153px] items-start border-t-2 border-[#d3d6da] bg-[#f7f8fa]">
      <div className="flex w-[338px] flex-col">
        <svg width="24" height="9" viewBox="0 0 24 9" className="ml-[144px] mt-[9px]"><path d="M0 9H24L12 0Z" fill="#777" /></svg>
        <Fit w={154} className="ml-[79px] mt-[12px] text-[51px] text-[#00a000]">906.46</Fit>
        <div className="mt-[2px] flex h-[60px] items-center">
          <Fit w={172} className="ml-[7px] text-[42px] text-[#666]">船舶制造</Fit>
          <Fit w={121} className="-mt-[2px] ml-[8px] text-[41px] text-[#00a000]">-1.89%</Fit>
        </div>
      </div>
      <div className="mt-[21px] flex h-[108px] w-[171px] items-center justify-center rounded-[20px] bg-linear-to-b from-[#f65049] to-[#ec736e] pt-[8px] text-[50px] leading-none text-white">买</div>
      <div className="ml-[17px] mt-[21px] flex h-[108px] w-[170px] items-center justify-center rounded-[20px] bg-linear-to-b from-[#3875fb] to-[#6e9bff] pt-[8px] text-[50px] leading-none text-white">卖</div>
      <div className="ml-[37px] mt-[21px] flex w-[80px] flex-col items-center text-[#666]">
        <Fit w={60} className="text-[60px] font-medium text-[#333]">撤</Fit>
        <Fit w={73} className="mt-[16px] text-[36px]">撤单</Fit>
      </div>
      <div className="ml-[29px] mt-[13px] flex w-[110px] flex-col items-center text-[#666]">
        <svg width="62" height="68" viewBox="0 0 62 68" fill="none" stroke="#333" strokeWidth="5">
          <path d="M27 4.500Q31 2.500 35 4.500L53 15Q57.500 18 57.500 22V45Q57.500 49 53 52L35 63Q31 65 27 63L9 52Q4.500 49 4.500 45V22Q4.500 18 9 15Z" />
          <circle cx="31" cy="34" r="9.500" />
        </svg>
        <Fit w={109} className="mt-[16px] text-[36px]">设自选</Fit>
      </div>
      <div className="ml-[27px] mt-[44px] flex w-[80px] flex-col items-center text-[#666]">
        <svg width="52" height="12" viewBox="0 0 52 12" fill="#333"><circle cx="6" cy="6" r="5.300" /><circle cx="26" cy="6" r="5.300" /><circle cx="46" cy="6" r="5.300" /></svg>
        <Fit w={73} className="mt-[41px] text-[36px]">更多</Fit>
      </div>
    </div>
  );
}

function NavBar() {
  return (
    <div className="flex h-[116px] items-center bg-[#fbfbfb] text-[#8a8a8a]">
      <svg width="1080" height="60" viewBox="0 2312 1080 60" fill="none" stroke="currentColor" strokeWidth="4" strokeLinejoin="round">
        <path d="M84 2333L102 2351L120 2333" />
        <path d="M275 2319V2365L237 2342Z" />
        <circle cx="444" cy="2341.500" r="23" />
        <rect x="612" y="2321" width="41" height="41" rx="2" />
        <path d="M801 2322H841M801 2332H841" />
        <path d="M821 2342V2361M805 2346L821 2362L837 2346" strokeWidth="3.500" />
      </svg>
    </div>
  );
}

export default function App() {
  return (
    <div className="flex h-[2400px] w-[1080px] flex-col overflow-hidden bg-white font-[Roboto,'Noto_Sans_CJK_SC',sans-serif]">
      <StatusBar />
      <Header />
      <Quote />
      <Tabs />
      <Toolbar />
      <MainChart />
      <div className="flex items-start">
        <div className="w-[646px]">
          <KdjPanel />
          <VolumePanel />
          <MacdPanel />
          <BollPanel />
          <TimeAxis />
        </div>
        <CostInfo />
      </div>
      <Banner />
      <TradeBar />
      <NavBar />
    </div>
  );
}
